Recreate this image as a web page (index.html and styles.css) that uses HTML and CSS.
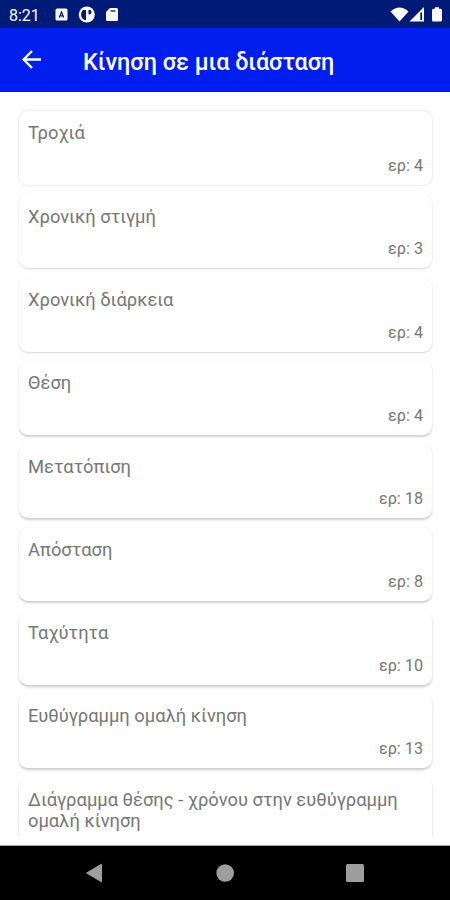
FILE: index.html
```html
<!DOCTYPE html>
<html lang="el">
<head>
  <meta charset="UTF-8" />
  <meta name="viewport" content="width=device-width, initial-scale=1.0"/>
  <title>Κίνηση σε μια διάσταση</title>
  <link rel="stylesheet" href="styles.css">
</head>

<body>
  <div class="status-bar">
    <span class="clock">8:21</span>
    <svg class="notifications" width="66" height="18" viewBox="0 0 66 18">
      <rect x="1.5" y="2.5" width="12" height="12" rx="1.5" fill="#fff"/>
      <path d="M5.3 11.5 L7.5 5.8 L9.7 11.5 M6.1 9.8 H8.9" fill="none" stroke="#001a78" stroke-width="1.2"/>
      <circle cx="32.8" cy="8.5" r="8" fill="#fff"/>
      <path d="M29 4 H32 V14 H30.5 Q27 12 27 8.5 Q27 5.5 29 4 Z" fill="#001a78"/>
      <path d="M34.5 4 H36 Q37.5 4 37.5 6 Q37.5 8.5 34.5 8.5 Z" fill="#001a78"/>
      <path d="M56 2 H62.5 Q64 2 64 3.5 V13.5 Q64 15 62.5 15 H53.5 Q52 15 52 13.5 V6 Z" fill="#fff"/>
      <path d="M56.5 5 H61.5" stroke="#001a78" stroke-width="1.6" opacity="0.8"/>
    </svg>
    <svg class="signals" width="54" height="18" viewBox="0 0 54 18">
      <path d="M0.5 5.5 Q9.5 -2.5 18.5 5.5 L9.5 15.5 Z" fill="#fff"/>
      <path d="M19.5 15.5 L34 1 V15.5 Z" fill="#fff"/>
      <path d="M31.2 6.5 V14" stroke="#001a78" stroke-width="1.8"/>
      <path d="M43.5 2.8 H45 V1.3 H49 V2.8 H50.5 Q52 2.8 52 4.3 V14 Q52 15.5 50.5 15.5 H43.5 Q42 15.5 42 14 V4.3 Q42 2.8 43.5 2.8 Z" fill="#fff"/>
    </svg>
  </div>

  <header class="toolbar">
    <svg class="back" width="20" height="20" viewBox="0 0 20 20">
      <path d="M19 9.5 H2 M10 1 L1.6 9.5 L10 18" fill="none" stroke="#fff" stroke-width="2.4"/>
    </svg>
    <h1>Κίνηση σε μια διάσταση</h1>
  </header>

  <main class="list">
    <div class="card level-1">
      <div class="name">Τροχιά</div>
      <div class="count">ερ: 4</div>
    </div>
    <div class="card level-2">
      <div class="name">Χρονική στιγμή</div>
      <div class="count">ερ: 3</div>
    </div>
    <div class="card level-2">
      <div class="name">Χρονική διάρκεια</div>
      <div class="count">ερ: 4</div>
    </div>
    <div class="card level-3">
      <div class="name">Θέση</div>
      <div class="count">ερ: 4</div>
    </div>
    <div class="card level-3">
      <div class="name">Μετατόπιση</div>
      <div class="count">ερ: 18</div>
    </div>
    <div class="card level-3">
      <div class="name">Απόσταση</div>
      <div class="count">ερ: 8</div>
    </div>
    <div class="card level-4">
      <div class="name">Ταχύτητα</div>
      <div class="count">ερ: 10</div>
    </div>
    <div class="card level-4">
      <div class="name">Ευθύγραμμη ομαλή κίνηση</div>
      <div class="count">ερ: 13</div>
    </div>
    <div class="card level-4">
      <div class="name">Διάγραμμα θέσης - χρόνου στην ευθύγραμμη ομαλή κίνηση</div>
    </div>
  </main>

  <nav class="nav-bar">
    <svg width="18" height="20" viewBox="0 0 18 20">
      <path d="M16.5 1.2 V18.8 L1.6 10 Z" fill="#9e9e9e" stroke="#9e9e9e" stroke-linejoin="round"/>
    </svg>
    <svg width="18" height="18" viewBox="0 0 18 18">
      <circle cx="9.2" cy="9" r="8.8" fill="#9e9e9e"/>
    </svg>
    <svg width="18" height="18" viewBox="0 0 18 18">
      <rect width="18" height="18" rx="1.5" fill="#9e9e9e"/>
    </svg>
  </nav>
</body>
</html>
```
FILE: styles.css
```css
* {
  box-sizing: border-box;
}

body {
  margin: 0;
  height: 900px;
  display: flex;
  flex-direction: column;
  overflow: hidden;
  font-family: Roboto, "Noto Sans", sans-serif;
  background: #fefefe;
}

.status-bar {
  flex: none;
  display: flex;
  align-items: center;
  height: 28px;
  padding: 2px 6px 0 9px;
  background: #001a78;
  color: #fff;
}

.clock {
  width: 45px;
  font-size: 16px;
}

.signals {
  margin-left: auto;
}

.toolbar {
  flex: none;
  display: flex;
  align-items: center;
  height: 64px;
  padding-left: 22px;
  background: #001eee;
  border-bottom: 1px solid #0018c4;
  color: #fff;
}

.toolbar h1 {
  margin: 4px 0 0 41px;
  font-size: 23.4px;
  font-weight: 500;
  line-height: 28px;
}

.list {
  flex: 1;
  min-height: 0;
  display: flex;
  flex-direction: column;
  gap: 9.3px;
  margin-bottom: 9px;
  padding: 19px 18px 0 19px;
  overflow: hidden;
}

.card {
  flex: none;
  display: flex;
  flex-direction: column;
  justify-content: space-between;
  height: 74px;
  padding: 11.4px 9px 10px;
  border-radius: 9px;
  background: #fefefe;
  color: #777;
}

.level-1 {
  box-shadow: 0 0 2px 1px rgba(0, 0, 0, 0.07);
}

.level-2 {
  box-shadow: 0 1px 2px rgba(0, 0, 0, 0.16);
}

.level-3 {
  box-shadow: 0 1.5px 2px rgba(0, 0, 0, 0.18);
}

.level-4 {
  box-shadow: 0 2px 2.5px rgba(0, 0, 0, 0.2);
}

.name {
  font-size: 18.35px;
  line-height: 21.5px;
}

.count {
  font-size: 16.2px;
  line-height: 19px;
  text-align: right;
}

.nav-bar {
  flex: none;
  display: flex;
  align-items: center;
  justify-content: space-between;
  height: 55px;
  padding: 0 86px 0 85px;
  border-top: 1px solid #a5a5a5;
  background: #000;
}
```
